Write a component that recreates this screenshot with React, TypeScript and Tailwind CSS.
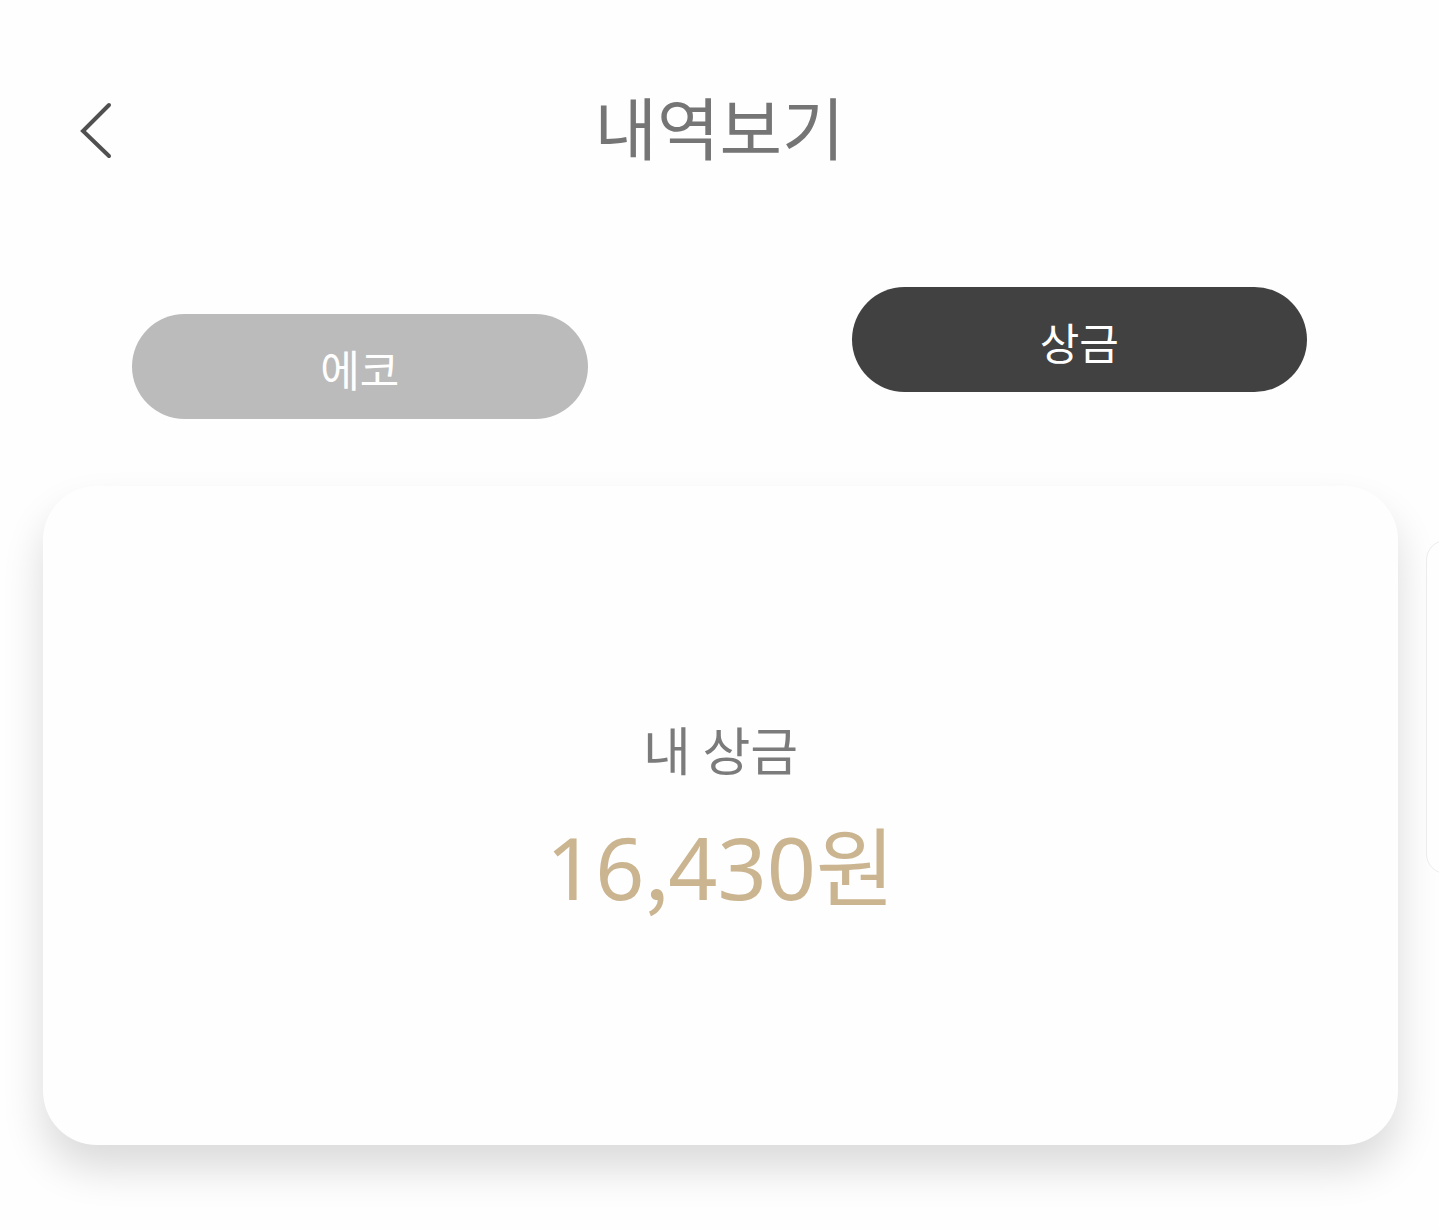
export default function App() {
  return (
    <div className="min-h-screen overflow-hidden bg-[#fefefe] font-['Noto_Sans_CJK_KR',sans-serif] font-normal">
      <header className="grid h-[260px] grid-cols-[1fr_auto_1fr] items-center px-[72px]">
        <button type="button" aria-label="뒤로" className="h-16 w-12">
          <svg viewBox="0 0 48 64" className="h-16 w-12" fill="none" stroke="#505050" strokeWidth="4" strokeLinecap="round" strokeLinejoin="miter">
            <path d="M37 7 L11 33 L37 58" />
          </svg>
        </button>
        <h1 className="pb-2 text-[68px] leading-[96px] text-[#757575]">내역보기</h1>
      </header>
      <nav className="grid grid-cols-2 pt-[27px]">
        <button type="button" className="mx-[132px] mt-[27px] h-[105px] rounded-full bg-[#bbbbbb] pt-1 text-[43px] text-white">에코</button>
        <button type="button" className="mx-[132px] mb-[27px] h-[105px] rounded-full bg-[#414141] pt-1 text-[43px] text-white">상금</button>
      </nav>
      <main className="flex gap-7 overflow-hidden pt-[67px] pr-[41px] pb-[84px] pl-[43px]">
        <section className="flex h-[659px] w-full shrink-0 flex-col items-center justify-center gap-[18px] rounded-[54px] bg-[#fefefe] pt-2 shadow-[0_24px_42px_rgba(0,0,0,0.14)]">
          <h2 className="text-[52px] leading-[72px] text-[#7b7b7b]">내 상금</h2>
          <p className="font-['Noto_Sans','Noto_Sans_CJK_KR',sans-serif] text-[86px] leading-[120px] text-[#cbb591]">
            16<span className="font-['Noto_Sans_CJK_KR',sans-serif]">,</span>430원
          </p>
        </section>
        <section className="mt-[54px] h-[334px] w-full shrink-0 rounded-[20px] border border-[#ececec] bg-[#fefefe]" />
      </main>
    </div>
  );
}
